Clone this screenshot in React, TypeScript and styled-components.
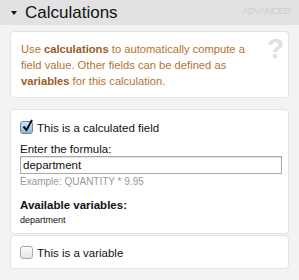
import styled, { createGlobalStyle } from 'styled-components'

const Global = createGlobalStyle`
  body {
    margin: 0;
    background: #f3f3f3;
    font-family: "Liberation Sans", Arial, sans-serif;
  }
`

const Header = styled.div`
  height: 25px;
  background: #e2e2e2;
  display: flex;
  align-items: center;
  padding: 0 9px 0 11px;
`
const Caret = styled.span`
  width: 0;
  height: 0;
  border-left: 3.5px solid transparent;
  border-right: 3.5px solid transparent;
  border-top: 4px solid #111;
  margin-top: 1px;
`
const Title = styled.h2`
  margin: 0 0 0 8px;
  font-size: 17px;
  font-weight: normal;
  color: #111;
`
const Advanced = styled.span`
  margin-left: auto;
  align-self: flex-start;
  padding-top: 6px;
  font-size: 9px;
  letter-spacing: -0.2px;
  color: #cdcdcd;
`
const Body = styled.div`
  padding: 6px 10px;
  display: flex;
  flex-direction: column;
`
const Card = styled.div<{ $gap?: number }>`
  position: relative;
  background: #fff;
  border: 1px solid #e4e4e4;
  border-radius: 4px;
  margin-top: ${p => p.$gap ?? 0}px;
`
const Info = styled(Card)`
  padding: 9px 30px 8px 10px;
  color: #b3742f;
  font-size: 11.2px;
  line-height: 16px;
  b { color: #9a5d1f; }
`
const Help = styled.span`
  position: absolute;
  right: 4px;
  top: 3px;
  font-size: 28px;
  line-height: 28px;
  font-weight: bold;
  color: #e2ded9;
`
const Section = styled(Card)<{ $top: number; $bottom: number }>`
  padding: ${p => p.$top}px 9px ${p => p.$bottom}px 9px;
`
const CheckRow = styled.label`
  display: flex;
  align-items: center;
  gap: 4px;
  font-size: 11.5px;
  color: #111;
`
const Box = styled.span<{ $on?: boolean }>`
  position: relative;
  width: 11px;
  height: 11px;
  border-radius: 3px;
  border: 1px solid ${p => (p.$on ? '#6a86a8' : '#a8a8a8')};
  background: ${p =>
    p.$on
      ? 'linear-gradient(#cfe3f7, #8fb7e0)'
      : 'linear-gradient(#fdfdfd, #e4e4e4)'};
  svg {
    position: absolute;
    left: 1px;
    top: -3px;
  }
`
const Label = styled.div`
  margin-top: 9px;
  font-size: 11.5px;
  color: #111;
`
const Input = styled.input`
  display: block;
  box-sizing: border-box;
  width: 262px;
  height: 18px;
  margin: 1px 0 0;
  padding: 0 2px;
  border: 1px solid #a9a9a9;
  box-shadow: inset 0 1px 1px rgba(0, 0, 0, 0.12);
  font-family: "Liberation Sans", Arial, sans-serif;
  font-size: 11.5px;
  color: #111;
`
const Hint = styled.div`
  margin-top: 2px;
  font-size: 10px;
  color: #999;
`
const Heading = styled.div`
  margin-top: 12px;
  font-size: 11.5px;
  font-weight: bold;
  color: #111;
`
const Var = styled.div`
  margin-top: 4px;
  font-size: 9px;
  color: #111;
`

const Check = ({ on, children }: { on?: boolean; children: string }) => (
  <CheckRow>
    <Box $on={on}>
      {on && (
        <svg width="11" height="13" viewBox="0 0 11 13">
          <path d="M1.5 7.5 L4.5 11 L10 1" fill="none" stroke="#111" strokeWidth="2" />
        </svg>
      )}
    </Box>
    {children}
  </CheckRow>
)

export default function App() {
  return (
    <>
      <Global />
      <Header>
        <Caret />
        <Title>Calculations</Title>
        <Advanced>ADVANCED</Advanced>
      </Header>
      <Body>
        <Info>
          Use <b>calculations</b> to automatically compute a field value. Other fields can be
          defined as <b>variables</b> for this calculation.
          <Help>?</Help>
        </Info>
        <Section $gap={11} $top={11} $bottom={8}>
          <Check on>This is a calculated field</Check>
          <Label>Enter the formula:</Label>
          <Input defaultValue="department" />
          <Hint>Example: QUANTITY * 9.95</Hint>
          <Heading>Available variables:</Heading>
          <Var>department</Var>
        </Section>
        <Section $gap={1} $top={10} $bottom={9}>
          <Check>This is a variable</Check>
        </Section>
      </Body>
    </>
  )
}
